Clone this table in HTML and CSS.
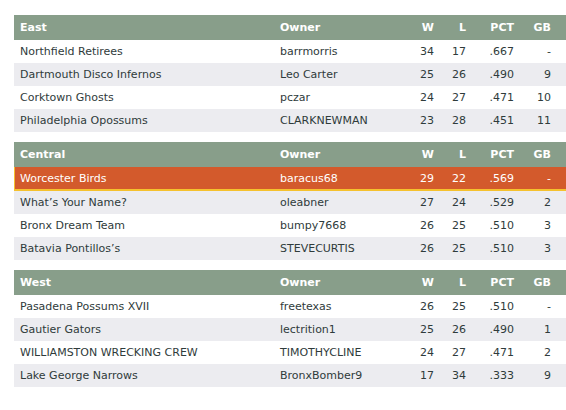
FILE: index.html
```html
<!DOCTYPE html>
<html>
<head>
<meta charset="utf-8">
<link rel="stylesheet" href="styles.css">
</head>
<body>
<div class="standings">
  <table class="division">
    <colgroup><col class="c-team"><col class="c-owner"><col class="c-w"><col class="c-l"><col class="c-pct"><col class="c-gb"></colgroup>
    <thead><tr><th class="team">East</th><th class="owner">Owner</th><th class="num">W</th><th class="num">L</th><th class="num">PCT</th><th class="num gb">GB</th></tr></thead>
    <tbody>
      <tr><td class="team">Northfield Retirees</td><td class="owner">barrmorris</td><td class="num">34</td><td class="num">17</td><td class="num">.667</td><td class="num gb">-</td></tr>
      <tr><td class="team">Dartmouth Disco Infernos</td><td class="owner">Leo Carter</td><td class="num">25</td><td class="num">26</td><td class="num">.490</td><td class="num gb">9</td></tr>
      <tr><td class="team">Corktown Ghosts</td><td class="owner">pczar</td><td class="num">24</td><td class="num">27</td><td class="num">.471</td><td class="num gb">10</td></tr>
      <tr><td class="team">Philadelphia Opossums</td><td class="owner">CLARKNEWMAN</td><td class="num">23</td><td class="num">28</td><td class="num">.451</td><td class="num gb">11</td></tr>
    </tbody>
  </table>
  <table class="division">
    <colgroup><col class="c-team"><col class="c-owner"><col class="c-w"><col class="c-l"><col class="c-pct"><col class="c-gb"></colgroup>
    <thead><tr><th class="team">Central</th><th class="owner">Owner</th><th class="num">W</th><th class="num">L</th><th class="num">PCT</th><th class="num gb">GB</th></tr></thead>
    <tbody>
      <tr class="mine"><td class="team">Worcester Birds</td><td class="owner">baracus68</td><td class="num">29</td><td class="num">22</td><td class="num">.569</td><td class="num gb">-</td></tr>
      <tr><td class="team">What’s Your Name?</td><td class="owner">oleabner</td><td class="num">27</td><td class="num">24</td><td class="num">.529</td><td class="num gb">2</td></tr>
      <tr><td class="team">Bronx Dream Team</td><td class="owner">bumpy7668</td><td class="num">26</td><td class="num">25</td><td class="num">.510</td><td class="num gb">3</td></tr>
      <tr><td class="team">Batavia Pontillos’s</td><td class="owner">STEVECURTIS</td><td class="num">26</td><td class="num">25</td><td class="num">.510</td><td class="num gb">3</td></tr>
    </tbody>
  </table>
  <table class="division">
    <colgroup><col class="c-team"><col class="c-owner"><col class="c-w"><col class="c-l"><col class="c-pct"><col class="c-gb"></colgroup>
    <thead><tr><th class="team">West</th><th class="owner">Owner</th><th class="num">W</th><th class="num">L</th><th class="num">PCT</th><th class="num gb">GB</th></tr></thead>
    <tbody>
      <tr><td class="team">Pasadena Possums XVII</td><td class="owner">freetexas</td><td class="num">26</td><td class="num">25</td><td class="num">.510</td><td class="num gb">-</td></tr>
      <tr><td class="team">Gautier Gators</td><td class="owner">lectrition1</td><td class="num">25</td><td class="num">26</td><td class="num">.490</td><td class="num gb">1</td></tr>
      <tr><td class="team">WILLIAMSTON WRECKING CREW</td><td class="owner">TIMOTHYCLINE</td><td class="num">24</td><td class="num">27</td><td class="num">.471</td><td class="num gb">2</td></tr>
      <tr><td class="team">Lake George Narrows</td><td class="owner">BronxBomber9</td><td class="num">17</td><td class="num">34</td><td class="num">.333</td><td class="num gb">9</td></tr>
    </tbody>
  </table>
</div>
</body>
</html>
```
FILE: styles.css
```css
html, body {
  margin: 0;
  padding: 0;
  background: #ffffff;
}
.standings {
  padding: 15px 0 0 14px;
  font-family: "DejaVu Sans", Verdana, sans-serif;
  font-size: 11px;
  color: #2f3b3b;
}
.division {
  width: 552px;
  table-layout: fixed;
  border-collapse: collapse;
  margin-bottom: 10px;
}
.c-team { width: 260px; }
.c-owner { width: 140px; }
.c-w { width: 26px; }
.c-l { width: 32px; }
.c-pct { width: 48px; }
.c-gb { width: 46px; }
.division th {
  background: #889e8a;
  color: #ffffff;
  font-weight: bold;
  height: 25px;
  padding: 0 6px;
  text-align: left;
}
.division td {
  height: 23px;
  padding: 0 6px;
  white-space: nowrap;
}
.division tbody tr:nth-child(even) td {
  background: #ececf0;
}
.division .num {
  text-align: right;
}
.division .gb {
  padding-right: 15px;
}
.division tr.mine td {
  background: #d35a2c;
  color: #ffffff;
  border-bottom: 2px solid #f5c12e;
  height: 22px;
}
.division tr.mine td.team {
  box-shadow: inset 1px 0 0 #f5c12e;
}
```
